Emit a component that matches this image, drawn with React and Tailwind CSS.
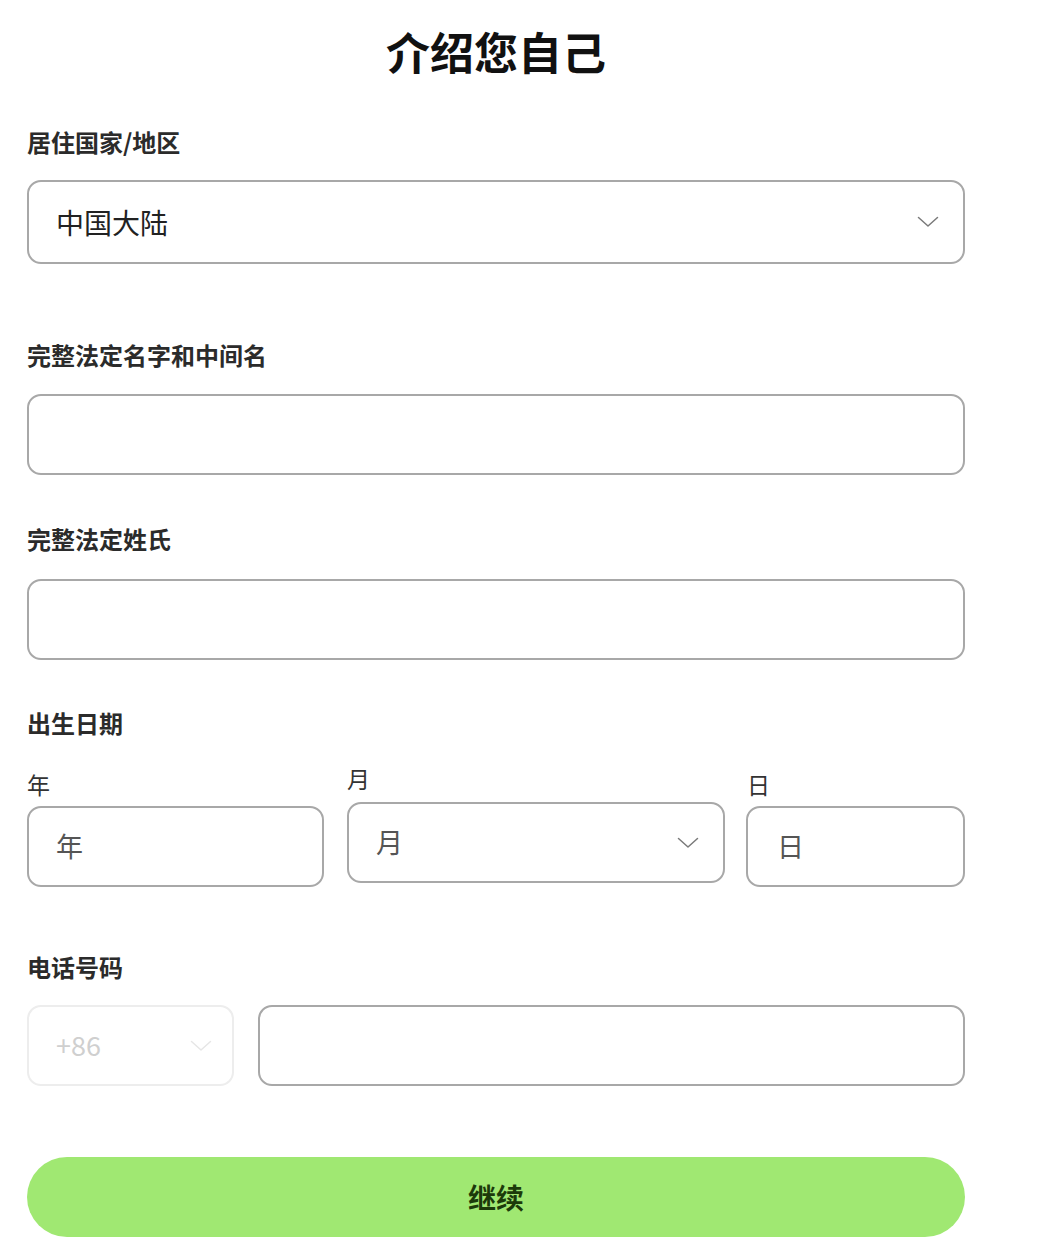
import React from "react";

const font = { fontFamily: '"Noto Sans CJK SC", "Noto Sans", sans-serif' };

function Chevron({ className = "" }) {
  return (
    <svg width="22" height="12" viewBox="0 0 22 12" className={className} fill="none">
      <path d="M1.5 1.5 L11 10 L20.5 1.5" stroke="currentColor" strokeWidth="1.5" strokeLinecap="round" strokeLinejoin="round" />
    </svg>
  );
}

function Label({ children, className = "" }) {
  return (
    <div className={`text-[24px] leading-[24px] font-bold text-[#2b2b2b] ${className}`}>{children}</div>
  );
}

function Box({ className = "", children }) {
  return (
    <div
      className={`h-[81px] rounded-[14px] border-2 border-[#a8a8a8] bg-white flex items-center px-[27px] ${className}`}
    >
      {children}
    </div>
  );
}

export default function App() {
  return (
    <div className="min-h-[1252px] bg-white" style={font}>
      <div className="w-[938px] ml-[27px] pt-[29px] flex flex-col">
        <h1 className="text-center text-[44px] leading-[44px] font-bold text-[#111]">介绍您自己</h1>

        <Label className="mt-[57px]">居住国家/地区</Label>
        <Box className="mt-[26px] h-[84px] justify-between pr-[24px]">
          <span className="text-[28px] text-[#222]">中国大陆</span>
          <Chevron className="text-[#7a7a7a]" />
        </Box>

        <Label className="mt-[79px]">完整法定名字和中间名</Label>
        <Box className="mt-[27px]" />

        <Label className="mt-[52px]">完整法定姓氏</Label>
        <Box className="mt-[28px]" />

        <Label className="mt-[51px]">出生日期</Label>
        <div className="flex items-start mt-[37px]">
          <div className="w-[297px] flex flex-col">
            <div className="text-[23px] leading-[24px] text-[#333]">年</div>
            <Box className="mt-[10px]">
              <span className="text-[27px] text-[#555]">年</span>
            </Box>
          </div>
          <div className="w-[378px] ml-[23px] -mt-[6px] flex flex-col">
            <div className="text-[23px] leading-[24px] text-[#333]">月</div>
            <Box className="mt-[12px] justify-between pr-[24px]">
              <span className="text-[27px] text-[#555]">月</span>
              <Chevron className="text-[#7a7a7a]" />
            </Box>
          </div>
          <div className="w-[219px] ml-[21px] flex flex-col">
            <div className="text-[23px] leading-[24px] text-[#333] pl-[1px]">日</div>
            <Box className="mt-[10px] px-[29px]">
              <span className="text-[27px] text-[#555]">日</span>
            </Box>
          </div>
        </div>

        <Label className="mt-[68px]">电话号码</Label>
        <div className="flex mt-[26px] gap-[24px]">
          <div className="w-[207px] h-[81px] rounded-[14px] border-2 border-[#ededed] flex items-center justify-between pl-[27px] pr-[20px]">
            <span className="text-[27px] text-[#cfcfcf]">+86</span>
            <Chevron className="text-[#e6e6e6]" />
          </div>
          <Box className="flex-1" />
        </div>

        <button className="mt-[71px] h-[80px] rounded-full bg-[#a0e872] text-[28px] font-bold text-[#1c3a0a] flex items-center justify-center">
          继续
        </button>
      </div>
    </div>
  );
}
